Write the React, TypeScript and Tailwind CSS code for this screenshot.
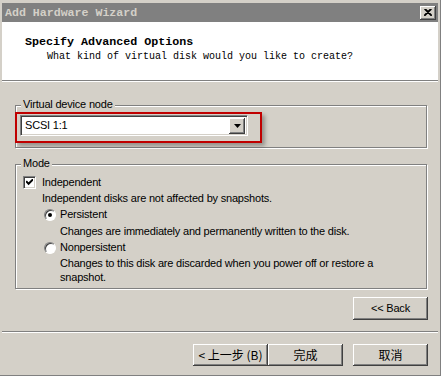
import React from "react";

const raised =
  "bg-[#d4d0c8] shadow-[inset_-1px_-1px_0_#404040,inset_1px_1px_0_#ffffff,inset_-2px_-2px_0_#808080,inset_2px_2px_0_#d4d0c8]";

function Button({ label, w = "w-[75px]", h = "h-[22px]", cjk = false }: { label: string; w?: string; h?: string; cjk?: boolean }) {
  return (
    <div
      className={`${w} ${h} ${raised} flex items-center justify-center text-black whitespace-pre ${cjk ? "text-[12px]" : "text-[11px]"}`}
      style={{ fontFamily: cjk ? '"Noto Sans CJK SC", "Liberation Sans", sans-serif' : '"Liberation Sans", sans-serif' }}
    >
      {label}
    </div>
  );
}

function Radio({ checked }: { checked?: boolean }) {
  return (
    <div className="w-[12px] h-[12px] rounded-full bg-white border border-t-[#808080] border-l-[#808080] border-b-white border-r-white shadow-[inset_1px_1px_0_#404040] flex items-center justify-center shrink-0">
      {checked && <div className="w-[4px] h-[4px] rounded-full bg-black" />}
    </div>
  );
}

export default function App() {
  const sans = { fontFamily: '"Liberation Sans", Arial, sans-serif' };
  const mono = { fontFamily: '"Liberation Mono", "Courier New", monospace' };
  return (
    <div className="w-[442px] h-[378px] bg-white">
      <div className="w-[441px] h-[376px] bg-[#d4d0c8] border-r border-b border-[#808080] pl-[2px] pr-[2px] pt-[3px] flex flex-col">
        {/* Title bar */}
        <div className="h-[19px] bg-[#808080] flex items-center justify-between pl-[3px] pr-[2px]">
          <span className="text-[11.6px] font-bold text-[#d4d0c8] leading-none" style={mono}>
            Add Hardware Wizard
          </span>
          <div className={`w-[16px] h-[14px] ${raised} flex items-center justify-center`}>
            <svg width="8" height="7" viewBox="0 0 8 7">
              <path d="M0.5 0 L7.5 7 M1.5 0 L8 6.5 M7.5 0 L0.5 7 M6.5 0 L0 6.5" stroke="#000" strokeWidth="1.2" fill="none" />
            </svg>
          </div>
        </div>
        {/* Header */}
        <div className="h-[58px] bg-white pl-[23px] pt-[13px]">
          <div className="text-[11.7px] font-bold text-black leading-[14px]" style={mono}>
            Specify Advanced Options
          </div>
          <div className="text-[10px] text-black leading-[12px] mt-[2px] pl-[22px]" style={mono}>
            What kind of virtual disk would you like to create?
          </div>
        </div>
        <div className="h-px bg-[#808080]" />
        <div className="h-px bg-white" />

        {/* Body */}
        <div className="flex flex-col text-[11px] text-black tracking-[-0.2px]" style={sans}>
          {/* Virtual device node group */}
          <div className="ml-[13px] mt-[23px] w-[412px] h-[43px] relative border border-[#808080] shadow-[1px_1px_0_#ffffff,inset_1px_1px_0_#ffffff] pl-[4px] pt-[9px]">
            <span className="absolute left-[5px] top-[-8px] bg-[#d4d0c8] px-[2px] leading-[13px]">Virtual device node</span>
            <div className="w-[228px] h-[21px] bg-white border border-t-[#808080] border-l-[#808080] border-b-white border-r-white shadow-[inset_1px_1px_0_#404040,inset_-1px_-1px_0_#d4d0c8] flex items-center justify-between pl-[4px] pr-[2px]">
              <span className="text-[11px]">SCSI 1:1</span>
              <div className={`w-[16px] h-[16px] ${raised} flex items-center justify-center`}>
                <svg width="7" height="4" viewBox="0 0 7 4">
                  <path d="M0 0 H7 L3.5 4 Z" fill="#000" />
                </svg>
              </div>
            </div>
            <div className="absolute left-[-1px] top-[6px] w-[247px] h-[31px] border-[2.5px] border-[#c00000] shadow-[3px_3px_4px_rgba(0,0,0,0.3)] pointer-events-none" />
          </div>

          {/* Mode group */}
          <div className="ml-[13px] mt-[16px] w-[412px] h-[125px] relative border border-[#808080] shadow-[1px_1px_0_#ffffff,inset_1px_1px_0_#ffffff] pl-[7px] pt-[9px]">
            <span className="absolute left-[5px] top-[-8px] bg-[#d4d0c8] px-[2px] leading-[13px]">Mode</span>
            <div className="h-[16px] flex items-center">
              <div className="w-[13px] h-[13px] bg-white border border-t-[#808080] border-l-[#808080] border-b-white border-r-white shadow-[inset_1px_1px_0_#404040,inset_-1px_-1px_0_#d4d0c8] flex items-center justify-center">
                <svg width="7" height="7" viewBox="0 0 7 7">
                  <polyline points="0.8,2.8 2.6,4.8 6.4,1" stroke="#000" strokeWidth="2" fill="none" strokeLinecap="square" />
                </svg>
              </div>
              <span className="ml-[6px]">Independent</span>
            </div>
            <div className="h-[16px] flex items-center pl-[19px]">Independent disks are not affected by snapshots.</div>
            <div className="h-[17px] flex items-center pl-[21px]">
              <Radio checked />
              <span className="ml-[4px]">Persistent</span>
            </div>
            <div className="h-[17px] flex items-center pl-[37px]">Changes are immediately and permanently written to the disk.</div>
            <div className="h-[15px] flex items-center pl-[21px]">
              <Radio />
              <span className="ml-[4px]">Nonpersistent</span>
            </div>
            <div className="pl-[37px] leading-[14px] pt-[1px]">
              Changes to this disk are discarded when you power off or restore a
              <br />
              snapshot.
            </div>
          </div>

          {/* Back */}
          <div className="ml-[13px] w-[413px] mt-[8px] flex justify-end">
            <Button label="<< Back" h="h-[23px]" />
          </div>
        </div>

        <div className="mt-[11px] h-px bg-[#808080]" />
        <div className="h-px bg-white" />

        <div className="mt-[11px] flex justify-end pr-[10px]">
          <Button label="< 上一步 (B)" cjk />
          <Button label="完成" cjk />
          <div className="w-[10px]" />
          <Button label="取消" cjk />
        </div>
      </div>
    </div>
  );
}
